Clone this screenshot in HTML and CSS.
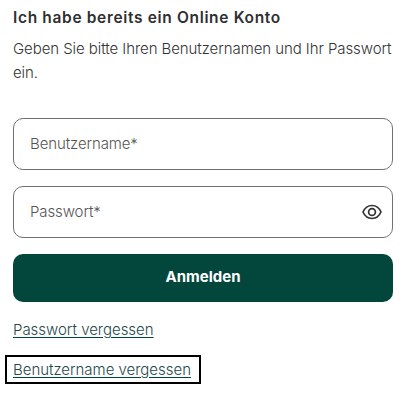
FILE: index.html
```html
<!DOCTYPE html>
<html lang="de">
<head>
<meta charset="utf-8">
<title>Anmelden</title>
<link rel="stylesheet" href="styles.css">
</head>
<body>
<main class="login">
  <h2 class="title">Ich habe bereits ein Online Konto</h2>
  <p class="intro">Geben Sie bitte Ihren Benutzernamen und Ihr Passwort ein.</p>
  <form class="form">
    <div class="field"><span class="label">Benutzername*</span></div>
    <div class="field"><span class="label">Passwort*</span>
      <svg class="eye" width="22" height="16" viewBox="0 0 22 16" fill="none" stroke="#333" stroke-width="1.700"><path d="M2 8C4 3.500 7.200 1.500 11 1.500S18 3.500 20 8C18 12.500 14.800 14.500 11 14.500S4 12.500 2 8Z"/><circle cx="11" cy="8" r="3.400"/></svg>
    </div>
    <button class="submit" type="button">Anmelden</button>
  </form>
  <div class="links">
    <a class="link" href="#">Passwort vergessen</a>
    <a class="link focused" href="#">Benutzername vergessen</a>
  </div>
</main>
</body>
</html>
```
FILE: styles.css
```css
* { box-sizing: border-box; }
html, body { margin: 0; padding: 0; background: #fff; }
body { min-height: 406px; font-family: Inter, "Open Sans", sans-serif; color: #333; }
.login { padding: 6px 13px 0; display: flex; flex-direction: column; }
.title { margin: 0; font-size: 15.500px; line-height: 24px; font-weight: 600; letter-spacing: .66px; color: #2f2f2f; }
.intro { margin: 7px 0 0; font-size: 15px; line-height: 24px; font-weight: 300; letter-spacing: -.07px; color: #333; }
.form { margin-top: 33px; display: flex; flex-direction: column; gap: 16px; }
.field { height: 52px; border: 1px solid #707070; border-radius: 10px; padding: 0 9px 2px 16px; display: flex; align-items: center; justify-content: space-between; }
.label { font-size: 15px; font-weight: 300; letter-spacing: -.1px; color: #555; }
.eye { display: block; margin-top: 2px; }
.submit { height: 48px; border: 0; border-radius: 10px; padding-bottom: 5px; background: #03473c; color: #fff; font: 700 15px Inter, sans-serif; }
.links { margin-top: 17px; display: flex; flex-direction: column; align-items: flex-start; gap: 19px; }
.link { font-size: 15px; line-height: 21px; font-weight: 300; letter-spacing: -.02px; color: #24484a; text-decoration: underline; text-decoration-color: #03473c; text-underline-offset: 2px; }
.focused { margin: -4px -10px -4px -8px; padding: 4px 10px 4px 8px; outline: 2px solid #000; outline-offset: -2px; }
```
